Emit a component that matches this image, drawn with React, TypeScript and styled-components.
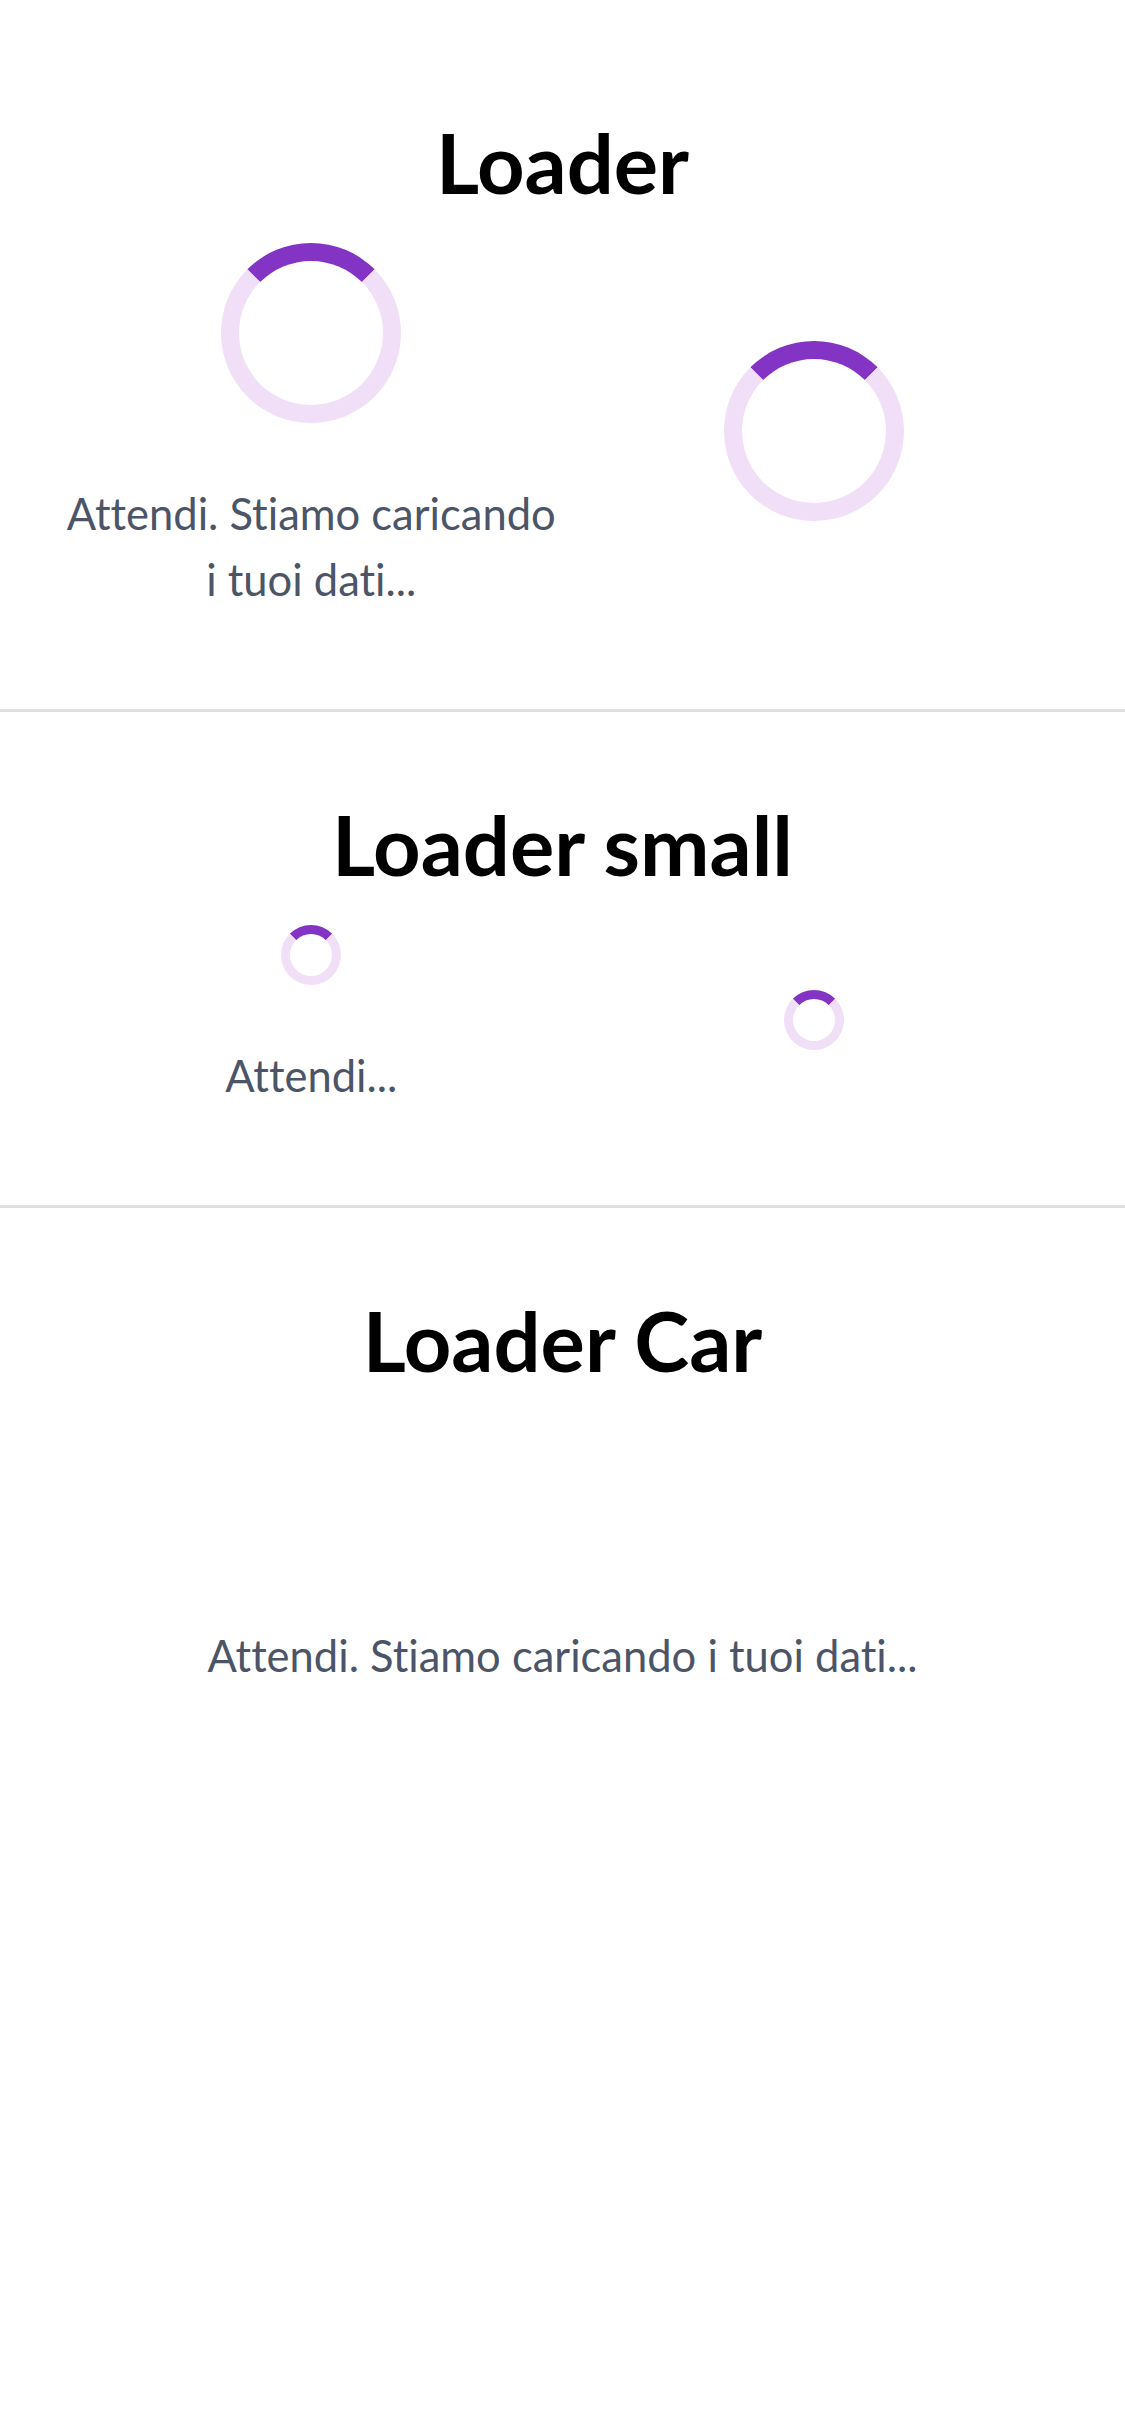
import React from "react";
import styled, { createGlobalStyle } from "styled-components";

const GlobalStyle = createGlobalStyle`
  html, body {
    margin: 0;
    padding: 0;
    background: #ffffff;
  }
  body {
    font-family: Lato, "Open Sans", "Liberation Sans", sans-serif;
    -webkit-font-smoothing: antialiased;
  }
  * { box-sizing: border-box; }
`;

const Page = styled.main`
  width: 1125px;
  min-height: 2436px;
  padding-top: 30px;
  background: #ffffff;
`;

const Section = styled.section<{ $last?: boolean }>`
  padding: 84px 60px ${(p) => (p.$last ? "0" : "91px")};
  border-bottom: ${(p) => (p.$last ? "none" : "3px solid #e1e1e1")};
`;

const Title = styled.h2`
  margin: 0 0 33px;
  font-family: Lato, "Open Sans", sans-serif;
  font-weight: 700;
  font-size: 83px;
  line-height: 96px;
  text-align: center;
  color: #000000;
`;

const Row = styled.div`
  display: grid;
  grid-template-columns: 1fr 1fr;
  align-items: center;
`;

const Column = styled.div`
  display: flex;
  flex-direction: column;
  align-items: center;
`;

const Spinner = styled.div<{ $size: number; $stroke: number }>`
  width: ${(p) => p.$size}px;
  height: ${(p) => p.$size}px;
  border-radius: 50%;
  border: ${(p) => p.$stroke}px solid #f1dff7;
  border-top-color: #8434c4;
  flex: none;
`;

const Caption = styled.p<{ $narrow?: boolean }>`
  margin: 57px 0 0;
  padding-bottom: 6px;
  max-width: ${(p) => (p.$narrow ? "500px" : "none")};
  font-family: Lato, "Open Sans", sans-serif;
  font-weight: 400;
  font-size: 43.5px;
  line-height: 66px;
  font-variant-ligatures: none;
  text-align: center;
  color: #4b5567;
`;

const CarStage = styled.div`
  height: 144px;
`;

export default function App() {
  return (
    <>
      <GlobalStyle />
      <Page>
        <Section>
          <Title>Loader</Title>
          <Row>
            <Column>
              <Spinner $size={180} $stroke={18} />
              <Caption $narrow>Attendi. Stiamo caricando i tuoi dati...</Caption>
            </Column>
            <Column>
              <Spinner $size={180} $stroke={18} />
            </Column>
          </Row>
        </Section>
        <Section>
          <Title>Loader small</Title>
          <Row>
            <Column>
              <Spinner $size={60} $stroke={9} />
              <Caption>Attendi...</Caption>
            </Column>
            <Column>
              <Spinner $size={60} $stroke={9} />
            </Column>
          </Row>
        </Section>
        <Section $last>
          <Title>Loader Car</Title>
          <CarStage />
          <Caption>Attendi. Stiamo caricando i tuoi dati...</Caption>
        </Section>
      </Page>
    </>
  );
}
